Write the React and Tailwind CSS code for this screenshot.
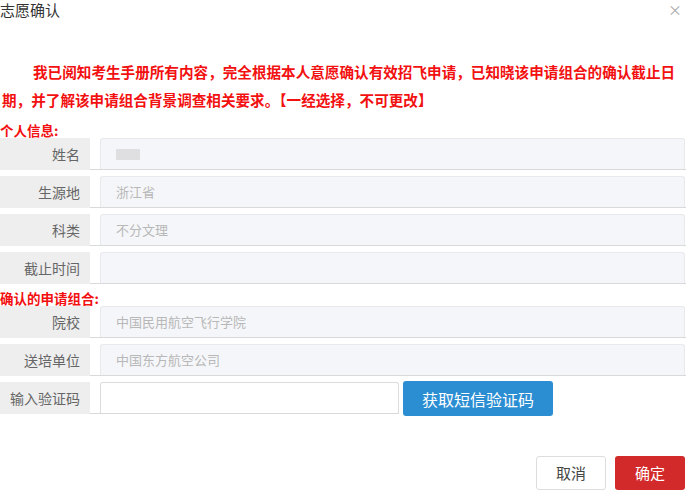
export default function App() {
  const font = { fontFamily: '"Microsoft YaHei", "Noto Sans CJK SC", "Noto Sans", sans-serif' };
  const Row = ({ label, value, children }) => (
    <div className="flex h-[32px]">
      <div className="w-[90px] shrink-0 bg-[#eeeeee] flex items-center justify-end pr-[10px] text-[14px] text-[#666]">
        {label}
      </div>
      {children ? (
        children
      ) : (
        <div className="flex-1 pl-[10px] pr-[1px] border-b border-[#d9d9d9]">
          <div className="h-[31px] bg-[#f5f6f9] border border-[#e8e9ec] border-b-0 rounded-t-[3px] flex items-center pl-[15px] text-[13px] text-[#b8b8b8]">
            {value}
          </div>
        </div>
      )}
    </div>
  );
  return (
    <div className="w-[686px] h-[491px] bg-white relative overflow-hidden" style={font}>
      <div className="h-[20px] leading-[20px] text-[15px] text-[#333]">志愿确认</div>
      <div className="absolute right-[4px] top-[0px] text-[14px] text-[#aaa] leading-[18px]">×</div>
      <p className="mt-[38px] pl-[2px] indent-[31px] text-[14.6px] leading-[28px] font-bold text-[#f21010]">
        我已阅知考生手册所有内容，完全根据本人意愿确认有效招飞申请，已知晓该申请组合的确认截止日期，并了解该申请组合背景调查相关要求。【一经选择，不可更改】
      </p>
      <div className="mt-[8px] h-[16px] leading-[16px] text-[13.5px] font-bold text-[#f21010]">个人信息:</div>
      <div className="flex flex-col gap-[6px]">
        <Row label="姓名" value={<span className="inline-block w-[24px] h-[11px] bg-[#dfdfe2]" />} />
        <Row label="生源地" value="浙江省" />
        <Row label="科类" value="不分文理" />
        <Row label="截止时间" value="" />
      </div>
      <div className="mt-[6px] h-[16px] leading-[16px] text-[13.5px] font-bold text-[#f21010]">确认的申请组合:</div>
      <div className="flex flex-col gap-[6px]">
        <Row label="院校" value="中国民用航空飞行学院" />
        <Row label="送培单位" value="中国东方航空公司" />
        <Row label="输入验证码">
          <div className="flex items-start">
            <div className="w-[309px] pl-[10px] border-b border-[#d9d9d9] h-[32px]">
              <div className="h-[31px] bg-white border border-[#dcdcdc] border-b-0 rounded-t-[3px]" />
            </div>
            <button className="ml-[4px] -mt-[1px] w-[150px] h-[35px] bg-[#2b8ed3] rounded-[3px] text-white text-[16px] flex items-center justify-center">
              获取短信验证码
            </button>
          </div>
        </Row>
      </div>
      <div className="mt-[42px] flex justify-end gap-[9px] pr-[1px]">
        <button className="w-[70px] h-[34px] bg-white border border-[#dddddd] rounded-[3px] text-[15px] text-[#444] flex items-center justify-center">
          取消
        </button>
        <button className="w-[70px] h-[34px] bg-[#d22a2a] rounded-[3px] text-[15px] text-white flex items-center justify-center">
          确定
        </button>
      </div>
    </div>
  );
}
